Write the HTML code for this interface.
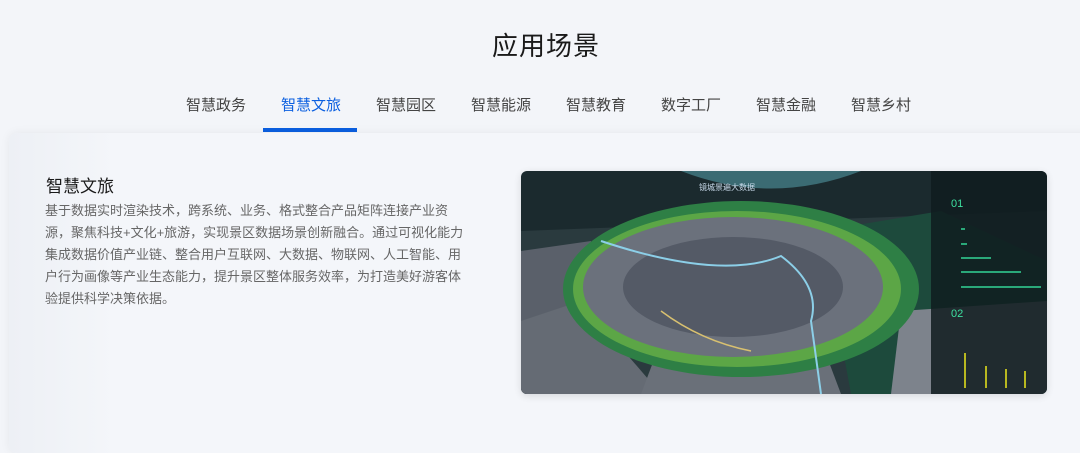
<!DOCTYPE html>
<html><head><meta charset="utf-8"><style>
*{margin:0;padding:0;box-sizing:border-box}
body{width:1080px;height:427px;overflow:hidden;background:#f3f5f9;font-family:"Liberation Sans","Noto Sans CJK SC",sans-serif;position:relative}
.t{position:absolute;top:26px;left:6px;width:1080px;text-align:center;font-size:26px;color:#1a1a1a;letter-spacing:1px}
.tab{position:absolute;top:94px;font-size:15px;color:#444}
.tab.a{color:#0b5fe0}
.ul{position:absolute;left:263px;top:128px;width:94px;height:4px;background:#0b5fe0}
.card{position:absolute;left:9px;top:133px;width:1090px;height:320px;background:linear-gradient(90deg,#edf0f5,#f4f6fa 10%,#f4f6fa);border-radius:8px;box-shadow:0 0 10px rgba(0,0,0,.06)}
h3{position:absolute;left:46px;top:172px;font-size:17px;font-weight:normal;color:#1a1a1a}
p{position:absolute;left:45px;top:200px;white-space:nowrap;font-size:13px;letter-spacing:0;line-height:22px;color:#666}
.img{position:absolute;left:521px;top:171px;width:526px;height:223px;border-radius:6px;overflow:hidden;box-shadow:0 2px 8px rgba(0,0,0,.12)}
</style></head><body>
<div class="t">应用场景</div>
<div class="tab" style="left:186px">智慧政务</div>
<div class="tab a" style="left:281px">智慧文旅</div>
<div class="tab" style="left:376px">智慧园区</div>
<div class="tab" style="left:471px">智慧能源</div>
<div class="tab" style="left:566px">智慧教育</div>
<div class="tab" style="left:661px">数字工厂</div>
<div class="tab" style="left:756px">智慧金融</div>
<div class="tab" style="left:851px">智慧乡村</div>
<div class="ul"></div>
<div class="card"></div>
<h3>智慧文旅</h3>
<p>基于数据实时渲染技术，跨系统、业务、格式整合产品矩阵连接产业资<br>源，聚焦科技+文化+旅游，实现景区数据场景创新融合。通过可视化能力<br>集成数据价值产业链、整合用户互联网、大数据、物联网、人工智能、用<br>户行为画像等产业生态能力，提升景区整体服务效率，为打造美好游客体<br>验提供科学决策依据。</p>
<div class="img"><svg width="526" height="223" viewBox="0 0 526 223">
<rect width="526" height="223" fill="#1b2a2e"/>
<path d="M0 60 L526 40 L526 223 L0 223Z" fill="#2a3a3e"/>
<path d="M160 0 Q250 35 340 0Z" fill="#3b6b73"/>
<path d="M300 60 L420 40 L526 90 L526 223 L330 223Z" fill="#1d4a3c"/>
<path d="M0 80 L70 70 L60 223 L0 223Z" fill="#5a606a"/>
<path d="M380 140 L526 130 L526 223 L370 223Z" fill="#7d838c"/>
<path d="M0 150 L60 130 L140 223 L0 223Z" fill="#656b74"/>
<path d="M140 170 L300 170 L320 223 L120 223Z" fill="#6a7079"/>
<ellipse cx="220" cy="118" rx="178" ry="88" fill="#2e7f45"/>
<ellipse cx="216" cy="118" rx="164" ry="78" fill="#7cc048" opacity=".6"/>
<ellipse cx="212" cy="116" rx="150" ry="70" fill="#6b717c"/>
<ellipse cx="212" cy="116" rx="110" ry="50" fill="#545a66"/>
<path d="M140 140 Q180 170 230 180" stroke="#d8c070" stroke-width="1.5" fill="none"/>
<path d="M80 70 Q200 110 260 85 Q300 115 290 150 L300 223" stroke="#8ccfe8" stroke-width="2" fill="none"/>
<rect x="410" y="0" width="116" height="223" fill="#0f1c1f" opacity=".85"/>
<text x="430" y="36" fill="#3ee0a0" font-size="11">01</text>
<text x="430" y="146" fill="#3ee0a0" font-size="11">02</text>
<g fill="#2aa879"><rect x="440" y="57" width="4" height="2"/><rect x="440" y="72" width="6" height="2"/><rect x="440" y="86" width="30" height="2"/><rect x="440" y="100" width="60" height="2"/><rect x="440" y="115" width="80" height="2"/></g>
<g fill="#b8b820"><rect x="443" y="182" width="2" height="35"/><rect x="464" y="195" width="2" height="22"/><rect x="484" y="198" width="2" height="19"/><rect x="503" y="200" width="2" height="17"/></g>
<text x="178" y="19" fill="#cde" font-size="8">镜城景遍大数据</text>
</svg></div>
</body></html>
